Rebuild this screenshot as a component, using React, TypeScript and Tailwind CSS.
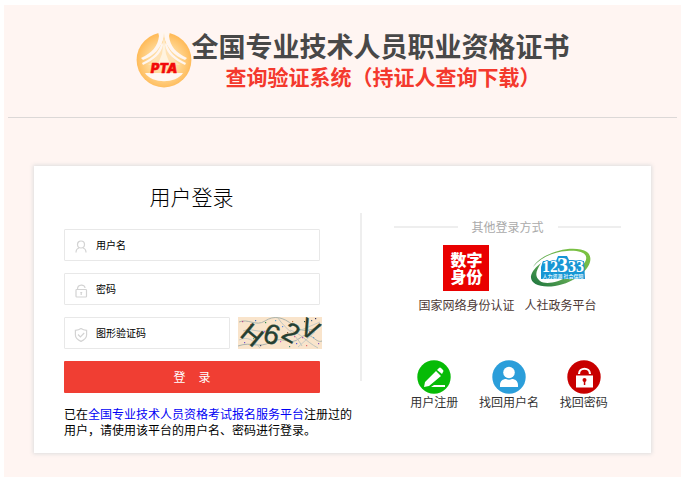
import type { ReactNode } from 'react';

const speckles = [
  [4, 4, '#c04a8a'], [9, 13, '#4b9a5b'], [6, 25, '#7a54c8'], [17, 3, '#3b6fc4'], [15, 21, '#3fb0b0'],
  [22, 28, '#4a4a6a'], [27, 5, '#3d8f4a'], [26, 14, '#d04fd0'], [31, 24, '#3a9a4a'], [37, 3, '#5aa0d0'],
  [36, 18, '#e04fb0'], [42, 24, '#d060c0'], [44, 9, '#5f8fe0'], [49, 15, '#9a6a4a'], [51, 29, '#4a8f7a'],
  [54, 4, '#c07a3a'], [58, 26, '#5a5ae0'], [61, 12, '#5fb06a'], [64, 20, '#b04fb0'], [66, 4, '#2f4f3f'],
  [68, 28, '#e06a6a'], [73, 3, '#4a6a8a'], [77, 1, '#2f2f5f'], [75, 20, '#5fa0d0'], [80, 26, '#8a5ac0'],
  [12, 7, '#e07a7a'], [33, 9, '#6a7ae0'], [46, 20, '#50b080'], [56, 19, '#e0609a'], [71, 14, '#8080d0'],
] as const;

function PtaLogo() {
  return (
    <svg viewBox="0 0 56 56" className="size-14 shrink-0" aria-label="PTA">
      <defs>
        <radialGradient id="gold" cx="50%" cy="52%" r="52%">
          <stop offset="0" stopColor="#ffedcb" />
          <stop offset="0.55" stopColor="#ffd794" />
          <stop offset="1" stopColor="#ffb955" />
        </radialGradient>
      </defs>
      <circle cx="28" cy="28" r="27.400" fill="url(#gold)" />
      {/* roof eaves on both sides of the spire */}
      <path d="M22 0 H34 L33 4 C34 14 40 21 51 26 L49 28 C38 24 31 16 28 5 C25 16 18 24 7 28 L5 26 C16 21 22 14 23 4Z" fill="#fff6f0" />
      <path d="M28 1 C27 16 22 25 12 33 H44 C34 25 29 16 28 1Z" fill="#ffe2b4" />
      <path d="M27 13 C25 22 18 28 7 33 L6 31 C17 26 23 20 26 10Z M29 13 C31 22 38 28 49 33 L50 31 C39 26 33 20 30 10Z" fill="#fff6f0" />
      <path d="M28 7 L26 22 L22 32 H34 L30 22Z" fill="#fff3df" />
      <path d="M9 41 C16 52 40 52 47 41Z" fill="#fff8f2" />
      <text x="28" y="41" textAnchor="middle" fontSize="13" fontWeight="900" fontStyle="italic" fill="#f20a0a" stroke="#f20a0a" strokeWidth="0.500" className="font-[Inter,sans-serif]">
        PTA
      </text>
    </svg>
  );
}

function Captcha() {
  return (
    <svg viewBox="0 0 84 32" className="h-8 w-[84px] shrink-0" role="img" aria-label="图形验证码">
      <rect width="84" height="32" fill="#f9e4cb" />
      <g fill="none" stroke="#aab3ac" strokeWidth="1">
        <path d="M1 5 C10 1 18 10 27 4 S45 0 55 8 S71 14 83 9" />
        <path d="M0 29 C14 24 20 32 33 25 S51 30 62 21 S77 27 84 24" />
        <path d="M40 1 C48 13 57 16 64 29 M52 13 C64 17 67 24 80 31 M5 14 C13 10 20 17 32 13" stroke="#bfc5be" />
        <path d="M56 16 L82 5 M60 30 L77 15 M1 23 C10 19 15 23 22 31" stroke="#c8ccc5" />
      </g>
      {speckles.map(([x, y, color]) => (
        <rect key={`${x}-${y}`} x={x} y={y} width="1.200" height="1.200" fill={color} />
      ))}
      <g textAnchor="middle" fill="#253f31" stroke="#253f31" strokeWidth="0.400" className="font-['Liberation_Sans',sans-serif]">
        <text x="14" y="27" fontSize="27" transform="rotate(40 14 18)">H</text>
        <text x="34" y="27" fontSize="28" transform="rotate(18 34 17)">6</text>
        <text x="53" y="25" fontSize="27" transform="rotate(30 53 16)">2</text>
        <text x="72" y="21" fontSize="26" transform="rotate(26 72 12)">V</text>
      </g>
    </svg>
  );
}

function Field({ name, placeholder, type = 'text', children }: { name: string; placeholder: string; type?: string; children: ReactNode }) {
  return (
    <label className="flex h-8 w-full min-w-0 items-center gap-2 rounded-[1px] border border-[#e8e8e8] pl-[9px]">
      <svg viewBox="0 0 14 14" className="mt-1 size-[14px] shrink-0" fill="none" stroke="#d3d3d3" strokeWidth="1.200">
        {children}
      </svg>
      <input
        type={type}
        name={name}
        placeholder={placeholder}
        aria-label={placeholder}
        className="h-full min-w-0 flex-1 bg-transparent pb-[2px] text-[10px] outline-none placeholder:text-black"
      />
    </label>
  );
}

function NumberLogo() {
  return (
    <svg viewBox="0 0 62 40" className="h-10 w-[62px]">
      <defs>
        <linearGradient id="leaf" x1="0" y1="1" x2="1" y2="0">
          <stop offset="0" stopColor="#18713d" />
          <stop offset="0.45" stopColor="#66ad55" />
          <stop offset="1" stopColor="#80c63d" />
        </linearGradient>
      </defs>
      <path d="M3 19 C13 3 45 -4 57 4 C68 13 51 34 25 38 C10 40 0 36 1 28 C2 23 6 19 11 15 C6 23 4 28 10 33 C20 40 47 27 55 14 C60 5 49 2 37 3 C22 4 10 10 3 19Z" fill="url(#leaf)" />
      <path d="M11 19 L13 13 L26 13 L28 8 L37 8 L39 12 L54 13 L55 31 L11 31Z" fill="#1696d4" />
      <g fill="#fff" stroke="#1696d4" strokeWidth="1.500" paintOrder="stroke" fontWeight="700" className="font-['Liberation_Serif',serif]">
        <text x="12" y="24" fontSize="16">12</text>
        <text x="27" y="24" fontSize="22">3</text>
        <text x="38" y="24" fontSize="16">33</text>
      </g>
      <text x="33" y="30" textAnchor="middle" fontSize="5" fontWeight="700" fill="#d9f0fb">
        人力资源 社会保障
      </text>
    </svg>
  );
}

function Action({ label, color, children }: { label: string; color: string; children: ReactNode }) {
  return (
    <a href="#" className="flex w-[77px] flex-col items-center text-xs leading-4 text-[#333]">
      <svg viewBox="0 0 34 34" className="size-[34px]">
        <circle cx="17" cy="17" r="16.700" fill={color} />
        {children}
      </svg>
      {label}
    </a>
  );
}

export default function App() {
  return (
    <div className="bg-white px-1 py-[5px] font-['Noto_Sans_CJK_SC',sans-serif] text-black">
      <div className="mr-1 bg-[#fff5f2] pb-6">
        <header className="mx-1 flex h-[113px] justify-center border-b border-[#dcd8d7] pt-[27px] pl-5">
          <PtaLogo />
          <h1 className="-mt-[2px] font-bold whitespace-nowrap">
            <span className="block text-[27px] leading-[31px] text-[#484848]">全国专业技术人员职业资格证书</span>
            <span className="block pl-[34px] text-[21px] leading-[30px] text-[#f4392d]">查询验证系统（持证人查询下载）</span>
          </h1>
        </header>

        <main className="mx-[30px] mt-12 grid grid-cols-[326fr_2fr_289fr] bg-white pb-[15px] shadow-[0_0_4px_1px_#dedede]">
          <section className="min-w-0 pt-[14px] pl-[30px]">
            <h2 className="mr-[41px] text-center text-[21px] leading-8 font-light">用户登录</h2>
            <form className="mt-[17px] mr-10 flex flex-col gap-3" onSubmit={(e) => e.preventDefault()}>
              <Field name="username" placeholder="用户名">
                <circle cx="7" cy="4.500" r="3.500" />
                <path d="M5 8 C3 8.500 2 10 2 12.500 M9 8 C11 8.500 12 10 12 12.500" />
              </Field>
              <Field name="password" placeholder="密码" type="password">
                <rect x="2" y="5.500" width="10.500" height="7.500" rx="0.800" />
                <path d="M3.500 5 C3.500 0 11 0 11 4 M7.200 8 V11 M6.300 8.500 H8.200" />
              </Field>
              <div className="-mr-[2px] flex gap-2">
                <Field name="captcha" placeholder="图形验证码">
                  <path d="M7 0.600 C9 2 11 2.300 12.600 2.400 V7 C12.600 10 10 12 7 13.400 C4 12 1.400 10 1.400 7 V2.400 C3 2.300 5 2 7 0.600Z M4 6.500 L6.400 9 L10.200 5" />
                </Field>
                <Captcha />
              </div>
              <button type="submit" className="flex h-8 items-center justify-center gap-[13px] rounded-[1px] bg-[#f03e33] text-xs text-white">
                <span>登</span>
                <span>录</span>
              </button>
            </form>
            <p className="mt-[13px] text-xs leading-4">
              已在<a href="#" className="text-[#0000f5]">全国专业技术人员资格考试报名服务平台</a>注册过的用户，请使用该平台的用户名、密码进行登录。
            </p>
          </section>

          <div className="mt-[47px] h-[168px] bg-[#eee]" />

          <section className="min-w-0 pt-[53px] pr-[30px] pl-8">
            <div className="flex items-center gap-[14px]">
              <span className="h-[2px] flex-1 bg-[#eee]" />
              <h3 className="text-xs leading-4 text-[#aaa]">其他登录方式</h3>
              <span className="h-[2px] flex-1 bg-[#eee]" />
            </div>
            <div className="mt-[10px] flex justify-center gap-[10px] text-xs leading-4 text-[#4c3835]">
              <a href="#" className="flex flex-col items-center gap-[6px]">
                <span className="flex size-[46px] flex-col items-center justify-center bg-[#e90000] text-base leading-[17px] font-black text-white">
                  <span>数字</span>
                  <span>身份</span>
                </span>
                国家网络身份认证
              </a>
              <a href="#" className="flex flex-col items-center justify-between pt-[3px]">
                <NumberLogo />
                人社政务平台
              </a>
            </div>
            <div className="mt-[47px] flex justify-center pl-[3px]">
              <Action label="用户注册" color="#07bb07">
                <path d="M7 27 L8 22 L19 11 L24 16 L12 26Z M20 10 L22 8 Q23 7 24 8 L26 10 Q27 11 26 12 L25 14Z M17 25 H28 V27 H14Z" fill="#fff" />
              </Action>
              <Action label="找回用户名" color="#2b9eda">
                <circle cx="17" cy="12.500" r="5.800" fill="#fff" />
                <path d="M8 27 V25 C8 21 11 19 14 19 C16 20 18 20 20 19 C23 19 26 21 26 25 V27Z" fill="#fff" />
              </Action>
              <Action label="找回密码" color="#c80000">
                <path d="M12 14 C12 7 23 7 23 14" fill="none" stroke="#fff" strokeWidth="2.200" />
                <rect x="9" y="15.500" width="17" height="12" fill="#fff" />
                <circle cx="17.500" cy="20" r="2" fill="#c80000" />
                <path d="M16.800 20 H18.300 V25 H16.800Z" fill="#c80000" />
              </Action>
            </div>
          </section>
        </main>
      </div>
    </div>
  );
}
